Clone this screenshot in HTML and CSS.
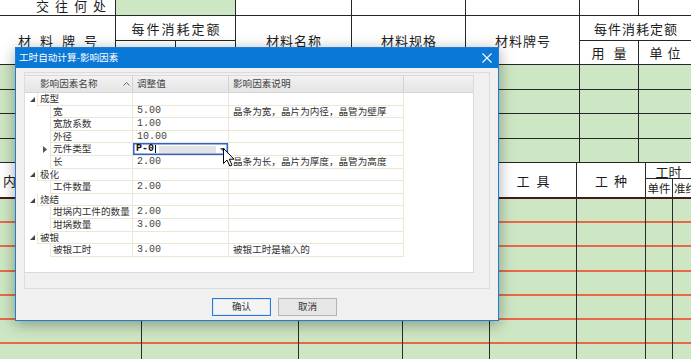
FILE: index.html
```html
<!DOCTYPE html>
<html lang="zh">
<head>
<meta charset="utf-8">
<title>工时自动计算-影响因素</title>
<link rel="stylesheet" href="styles.css">
</head>
<body>
<div class="screen">
  <div class="sheet">
    <div class="sec-a">
      <div class="c w top-t"><span class="ls6">交往何处</span></div>
      <div class="c g"></div>
      <div class="c w"></div>
      <div class="c w"></div>
      <div class="c w"></div>
      <div class="c w"></div>
      <div class="c w"></div>

      <div class="c w r2"><span class="ls9">材料牌号</span></div>
      <div class="c w"><span class="ls2">每件消耗定额</span></div>
      <div class="c w r2"><span class="ls1">材料名称</span></div>
      <div class="c w r2"><span class="ls1">材料规格</span></div>
      <div class="c w r2"><span class="ls1">材料牌号</span></div>
      <div class="c w s2"><span class="ls1">每件消耗定额</span></div>
      <div class="c split"><div class="c w half"><span class="ls9">用量</span></div><div class="c w half"><span class="ls5">单位</span></div></div>
      <div class="c w"><span class="ls9">用量</span></div>
      <div class="c w"><span class="ls5">单位</span></div>

      <div class="g"></div><div class="g"></div><div class="g"></div><div class="g"></div><div class="g"></div><div class="g"></div><div class="g"></div>
      <div class="g"></div><div class="g"></div><div class="g"></div><div class="g"></div><div class="g"></div><div class="g"></div><div class="g"></div>
      <div class="g"></div><div class="g"></div><div class="g"></div><div class="g"></div><div class="g"></div><div class="g"></div><div class="g"></div>
      <div class="g"></div><div class="g"></div><div class="g"></div><div class="g"></div><div class="g"></div><div class="g"></div><div class="g"></div>
    </div>

    <div class="sec-b">
      <div class="c w hb r2 left"><span>内 容</span></div>
      <div class="c w hb r2"></div>
      <div class="c w hb r2"></div>
      <div class="c w hb r2"></div>
      <div class="c w hb r2"><span class="ls7">工具</span></div>
      <div class="c w hb r2"><span class="ls6">工种</span></div>
      <div class="c w ht s2"><span>工时</span></div>
      <div class="c w hb sm"><span>单件</span></div>
      <div class="c w hb sm left1"><span>准终</span></div>

      <div class="gb"></div><div class="gb"></div><div class="gb"></div><div class="gb"></div><div class="gb"></div><div class="gb"></div><div class="gb"></div><div class="gb"></div>
      <div class="gb"></div><div class="gb"></div><div class="gb"></div><div class="gb"></div><div class="gb"></div><div class="gb"></div><div class="gb"></div><div class="gb"></div>
      <div class="gb"></div><div class="gb"></div><div class="gb"></div><div class="gb"></div><div class="gb"></div><div class="gb"></div><div class="gb"></div><div class="gb"></div>
      <div class="gb"></div><div class="gb"></div><div class="gb"></div><div class="gb"></div><div class="gb"></div><div class="gb"></div><div class="gb"></div><div class="gb"></div>
      <div class="gb"></div><div class="gb"></div><div class="gb"></div><div class="gb"></div><div class="gb"></div><div class="gb"></div><div class="gb"></div><div class="gb"></div>
      <div class="gb"></div><div class="gb"></div><div class="gb"></div><div class="gb"></div><div class="gb"></div><div class="gb"></div><div class="gb"></div><div class="gb"></div>
      <div class="gb"></div><div class="gb"></div><div class="gb"></div><div class="gb"></div><div class="gb"></div><div class="gb"></div><div class="gb"></div><div class="gb"></div>
    </div>
  </div>

  <div class="dlg">
    <div class="ttl">
      <span>工时自动计算-影响因素</span>
      <svg class="close" width="10" height="10" viewBox="0 0 10 10"><path d="M0.5 0.5 L9.5 9.5 M9.5 0.5 L0.5 9.5" stroke="#fff" stroke-width="1.1" fill="none"/></svg>
    </div>
    <div class="body">
      <div class="panel">
        <div class="grid">
          <div class="ghead">
            <div class="gh h1"><span>影响因素名称</span><svg width="7" height="4" viewBox="0 0 7 4"><path d="M0.5 3.5 L3.5 0.5 L6.5 3.5" stroke="#666" stroke-width="1" fill="none"/></svg></div>
            <div class="gh h2">调整值</div>
            <div class="gh h3">影响因素说明</div>
            <div class="gh h4"></div>
          </div>

          <div class="row">
            <div class="c1"><div class="ind grp"><svg width="5" height="5" viewBox="0 0 5 5"><polygon points="5,0 5,5 0,5" fill="#444"/></svg></div><div class="nm">成型</div></div>
            <div class="vl"></div><div class="ds"></div>
          </div>
          <div class="row">
            <div class="c1"><div class="ind ch"></div><div class="nm">宽</div></div>
            <div class="vl">5.00</div><div class="ds">晶条为宽，晶片为内径，晶管为壁厚</div>
          </div>
          <div class="row">
            <div class="c1"><div class="ind ch"></div><div class="nm">宽放系数</div></div>
            <div class="vl">1.00</div><div class="ds"></div>
          </div>
          <div class="row">
            <div class="c1"><div class="ind ch"></div><div class="nm">外径</div></div>
            <div class="vl">10.00</div><div class="ds"></div>
          </div>
          <div class="row">
            <div class="c1"><div class="ind ch cur"><svg width="4" height="7" viewBox="0 0 4 7"><polygon points="0,0 4,3.5 0,7" fill="#555"/></svg></div><div class="nm">元件类型</div></div>
            <div class="vl edit"><b>P-0</b><i class="caret"></i><span class="fill"></span><svg width="5" height="3" viewBox="0 0 5 3"><polygon points="0,0 5,0 2.5,3" fill="#555"/></svg></div><div class="ds"></div>
          </div>
          <div class="row">
            <div class="c1"><div class="ind ch"></div><div class="nm">长</div></div>
            <div class="vl">2.00</div><div class="ds">晶条为长，晶片为厚度，晶管为高度</div>
          </div>
          <div class="row">
            <div class="c1"><div class="ind grp"><svg width="5" height="5" viewBox="0 0 5 5"><polygon points="5,0 5,5 0,5" fill="#444"/></svg></div><div class="nm">极化</div></div>
            <div class="vl"></div><div class="ds"></div>
          </div>
          <div class="row">
            <div class="c1"><div class="ind ch"></div><div class="nm">工件数量</div></div>
            <div class="vl">2.00</div><div class="ds"></div>
          </div>
          <div class="row">
            <div class="c1"><div class="ind grp"><svg width="5" height="5" viewBox="0 0 5 5"><polygon points="5,0 5,5 0,5" fill="#444"/></svg></div><div class="nm">烧结</div></div>
            <div class="vl"></div><div class="ds"></div>
          </div>
          <div class="row">
            <div class="c1"><div class="ind ch"></div><div class="nm">坩埚内工件的数量</div></div>
            <div class="vl">2.00</div><div class="ds"></div>
          </div>
          <div class="row">
            <div class="c1"><div class="ind ch"></div><div class="nm">坩埚数量</div></div>
            <div class="vl">3.00</div><div class="ds"></div>
          </div>
          <div class="row">
            <div class="c1"><div class="ind grp"><svg width="5" height="5" viewBox="0 0 5 5"><polygon points="5,0 5,5 0,5" fill="#444"/></svg></div><div class="nm">被银</div></div>
            <div class="vl"></div><div class="ds"></div>
          </div>
          <div class="row">
            <div class="c1"><div class="ind ch"></div><div class="nm">被银工时</div></div>
            <div class="vl">3.00</div><div class="ds">被银工时是输入的</div>
          </div>
        </div>
      </div>
      <div class="btns">
        <div class="btn ok">确认</div>
        <div class="btn">取消</div>
      </div>
    </div>
  </div>

  <svg class="cursor" width="12" height="19" viewBox="0 0 12 19"><path d="M0.5 0.5 L0.5 15.5 L4 12 L6.8 18 L9 17 L6.3 11.2 L11 11.2 Z" fill="#fff" stroke="#000" stroke-width="1" stroke-linejoin="round"/></svg>
</div>
</body>
</html>
```

FILE: styles.css
```css
* { box-sizing: border-box; margin: 0; padding: 0; }
html, body { width: 691px; height: 359px; overflow: hidden; }
body {
  font-family: "Noto Sans CJK SC", "Noto Sans", sans-serif;
  background: #cde6c3;
}
.screen { position: relative; width: 691px; height: 359px; overflow: hidden; }

/* background spreadsheet */
.sheet { width: 691px; color: #1c1c1c; font-size: 13px; }
.sec-a {
  display: grid;
  grid-template-columns: 115px 119px 115px 113px 113px 58px 1fr;
  grid-template-rows: 15px 24px 23px 24px 23px 24px 23px;
  gap: 1px;
  background: #262626;
}
.c {
  display: flex; align-items: center; justify-content: center;
  overflow: hidden; white-space: nowrap; line-height: 1;
}
.w { background: #fff; }
.g { background: #cde6c3; }
.r2 { grid-row: span 2; }
.s2 { grid-column: span 2; }
.top-t { justify-content: flex-start; align-items: flex-end; padding: 0 0 3px 30px; }
.ls1 { letter-spacing: 1px; padding-left: 1px; }
.ls2 { letter-spacing: 2px; padding-left: 2px; }
.ls5 { letter-spacing: 5px; padding-left: 5px; }
.ls6 { letter-spacing: 6px; padding-left: 6px; }
.ls7 { letter-spacing: 7px; padding-left: 7px; }
.ls9 { letter-spacing: 9px; padding-left: 9px; }
.split { display: flex; gap: 1px; background: #262626; align-items: stretch; }
.half { flex: 1; }

.sec-b {
  display: grid;
  grid-template-columns: 141px 156px 103px 86px 86px 68px 26px 1fr;
  grid-template-rows: 16px 20px repeat(7, 24.2px);
  column-gap: 1px;
  background: #2b2b2b;
  border-top: 1px solid #262626;
}
.hb { border-bottom: 2px solid #4a1a12; }
.ht { border-bottom: 1px solid #262626; padding-top: 1px; }
.sm { font-size: 11.5px; padding-top: 2px; }
.left { justify-content: flex-start; padding-left: 3px; }
.left1 { justify-content: flex-start; padding-left: 1px; }
.gb { background: #cde6c3; border-bottom: 2px solid #e8694a; }

/* dialog */
.dlg {
  position: absolute; left: 15px; top: 47px;
  width: 484px; height: 274px;
  border: 1px solid #1b7fd6;
  background: #f0f0f0;
  box-shadow: 0 3px 14px rgba(0, 0, 0, .35);
  font-size: 9.6px; color: #333;
  display: flex; flex-direction: column;
}
.ttl {
  height: 20px; background: #0a78d7; color: #fff;
  display: flex; align-items: center; justify-content: space-between;
  padding: 0 6px 0 3px; line-height: 1;
}
.body { flex: 1; padding: 4px 8px 0 8px; display: flex; flex-direction: column; }
.panel { height: 217px; border: 1px solid #dcdcdc; padding: 2px 15px 15px 0; }
.grid {
  height: 100%; background: #fff;
  border: 1px solid #dadada; border-left: 0;
}
.ghead {
  display: flex; height: 17px;
  background: linear-gradient(#f2f2f2, #e4e4e4);
  border-bottom: 1px solid #d6d6d6;
  color: #444;
}
.gh { display: flex; align-items: center; border-right: 1px solid #d2d2d2; line-height: 1; }
.h1 { width: 108px; padding: 0 2px 0 15px; justify-content: space-between; }
.h2 { width: 96px; padding-left: 4px; }
.h3 { width: 175px; padding-left: 4px; }
.h4 { flex: 1; border-right: 0; }

.row { display: flex; height: 12.6px; line-height: 1; }
.c1 { width: 108px; display: flex; }
.ind { display: flex; align-items: center; }
.grp { width: 12px; padding-left: 5px; }
.ch { width: 25px; }
.cur { padding-left: 18px; }
.nm, .vl, .ds {
  display: flex; align-items: center;
  border-bottom: 1px solid #ece6d4; border-right: 1px solid #ece6d4;
  white-space: nowrap;
}
.nm { flex: 1; border-left: 1px solid #ece6d4; padding-left: 2px; }
.vl { width: 96px; padding-left: 4px; font-family: "Liberation Mono", monospace; font-size: 10px; color: #444; }
.ds { width: 175px; padding-left: 4px; }
.edit {
  box-shadow: inset 0 0 0 1.5px #2c64c8;
  padding: 0 3px 0 3px;
  color: #111;
}
.edit b { font-weight: 700; }
.caret { display: block; width: 1px; height: 8px; background: #000; margin-left: 1px; }
.fill { flex: 1; height: 7px; background: #e3e3e3; margin: 0 4px 0 3px; }

.btns { display: flex; gap: 7px; padding-left: 188px; margin-top: 9px; }
.btn {
  width: 59px; height: 18px;
  display: flex; align-items: center; justify-content: center;
  border: 1px solid #b4b4b4; background: #e6e6e6; line-height: 1;
}
.ok { border-color: #2a7bd6; background: #f4f4f4; box-shadow: inset 0 0 0 1px #d8e8f8; }

.cursor { position: absolute; left: 223px; top: 148px; }
```
